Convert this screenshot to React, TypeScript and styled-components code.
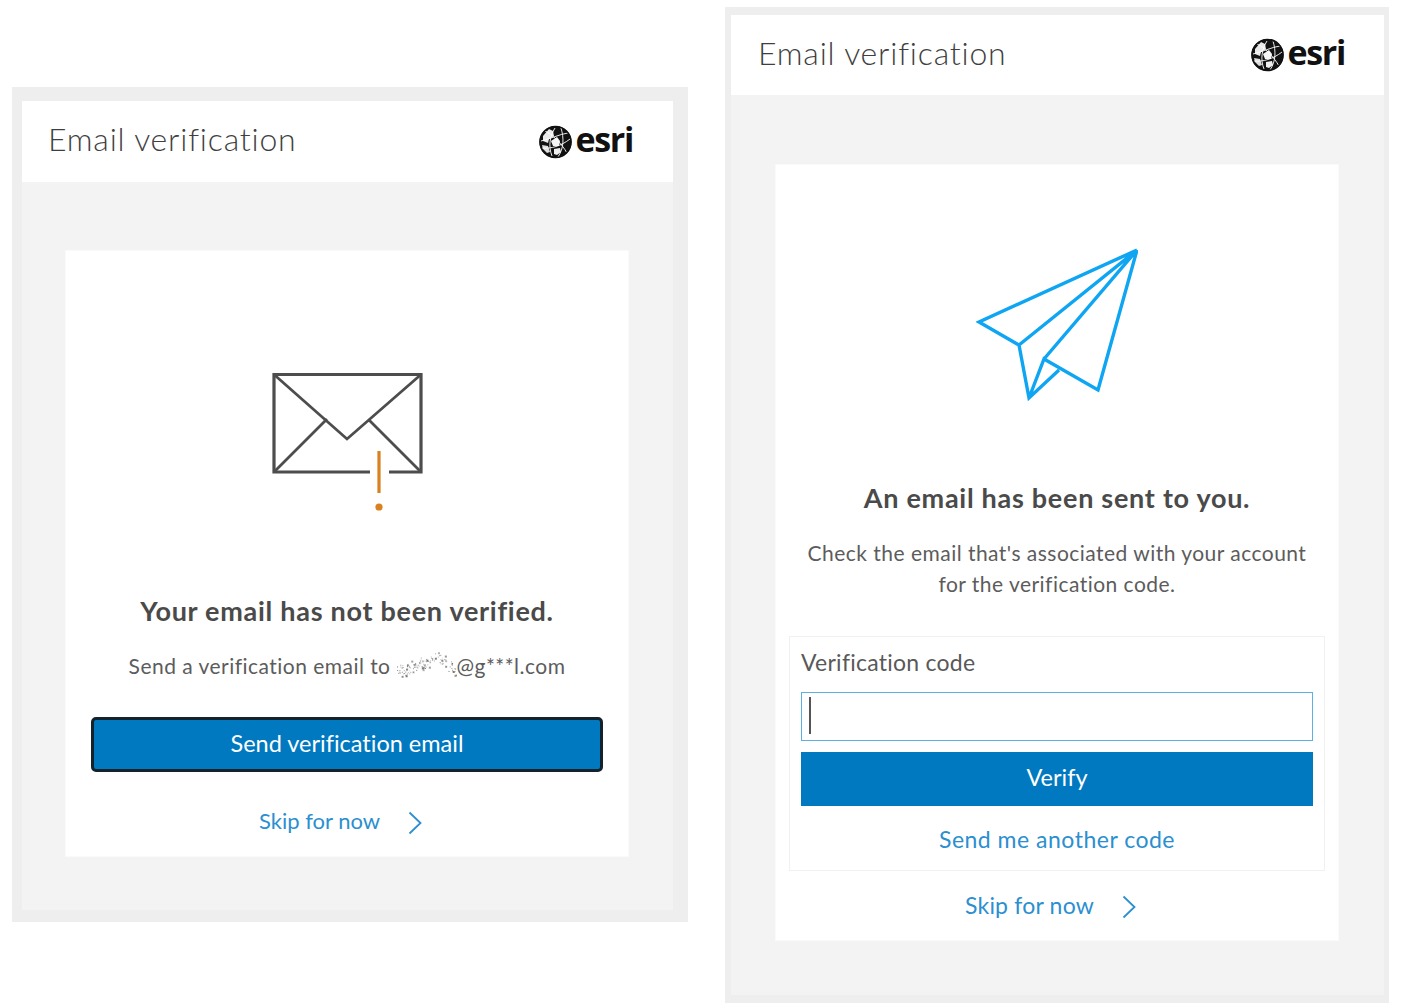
import React from "react";
import styled, { createGlobalStyle } from "styled-components";

const Global = createGlobalStyle`
  html, body { margin: 0; padding: 0; background: #fff; }
  body { font-family: "Lato", "Noto Sans", sans-serif; color: #4c4c4c; font-variant-ligatures: none; }
  * { box-sizing: border-box; }
`;

const Page = styled.div`
  display: flex;
  align-items: flex-start;
  width: 1401px;
  height: 1008px;
  overflow: hidden;
  padding: 7px 12px 0 12px;
  gap: 37px;
`;

const Frame = styled.section<{ $left?: boolean }>`
  flex: none;
  background: #eeeeee;
  width: ${(p) => (p.$left ? "676px" : "664px")};
  margin-top: ${(p) => (p.$left ? "80px" : "0")};
  padding: ${(p) => (p.$left ? "14px 15px 12px 10px" : "8px 5px 8px 6px")};
`;

const Inner = styled.div`
  background: #f3f3f3;
  display: flex;
  flex-direction: column;
`;

const Header = styled.header<{ $left?: boolean }>`
  height: ${(p) => (p.$left ? "81px" : "80px")};
  background: #fff;
  display: flex;
  align-items: center;
  justify-content: space-between;
  padding: ${(p) => (p.$left ? "0 40px 0 26px" : "0 39px 0 27px")};
`;

const Title = styled.h1`
  margin: 0 0 6px;
  font-size: 32px;
  font-weight: 300;
  letter-spacing: 0.8px;
  color: #3f3f3f;
`;

const Logo = styled.div`
  display: flex;
  align-items: center;
  gap: 3px;
`;

const LogoWord = styled.span`
  font-family: "Open Sans", sans-serif;
  font-size: 34px;
  font-weight: 700;
  line-height: 34px;
  letter-spacing: -1.3px;
  color: #111;
  margin-bottom: 6px;
`;

const Body = styled.div<{ $left?: boolean }>`
  padding: ${(p) => (p.$left ? "68px 44px 53px 43px" : "69px 45px 54px 44px")};
`;

const Card = styled.div<{ $left?: boolean }>`
  background: #fff;
  height: ${(p) => (p.$left ? "607px" : "777px")};
  border: 1px solid #fafafa;
  display: flex;
  flex-direction: column;
  align-items: center;
  padding: ${(p) => (p.$left ? "121px 25px 0" : "83px 13px 0")};
`;

const Illustration = styled.svg`
  display: block;
  flex: none;
`;

const Heading = styled.h2<{ $top: number }>`
  margin: ${(p) => p.$top}px 0 0;
  font-size: 27px;
  line-height: 32px;
  font-weight: 700;
  letter-spacing: 0.72px;
  color: #4a4a4a;
  text-align: center;
`;

const Message = styled.p<{ $top: number }>`
  margin: ${(p) => p.$top}px 0 0;
  font-size: 21px;
  line-height: 31px;
  font-weight: 400;
  letter-spacing: 0.47px;
  color: #5c5c5c;
  text-align: center;
  display: flex;
  flex-wrap: wrap;
  justify-content: center;
  align-items: center;
`;

const Redacted = styled.svg`
  margin: 0 0 0 6px;
`;

const ButtonGap = styled.div`
  height: 36px;
  flex: none;
`;

const PrimaryButton = styled.button<{ $focused?: boolean }>`
  display: block;
  width: ${(p) => (p.$focused ? "512px" : "100%")};
  height: ${(p) => (p.$focused ? "55px" : "54px")};
  background: #0079c1;
  color: #fff;
  font-family: inherit;
  font-size: 23.5px;
  font-weight: 400;
  font-variant-ligatures: none;
  border: ${(p) => (p.$focused ? "3px solid #14222c" : "0")};
  border-radius: ${(p) => (p.$focused ? "5px" : "0")};
  padding: 0 0 4px;
`;

const SkipLink = styled.a<{ $top: number; $wide?: boolean }>`
  display: flex;
  align-items: center;
  gap: 28px;
  margin-top: ${(p) => p.$top}px;
  padding-right: 13px;
  font-size: ${(p) => (p.$wide ? "23px" : "22px")};
  letter-spacing: ${(p) => (p.$wide ? "0.2px" : "0")};
  line-height: 30px;
  color: #2b8fd0;
  text-decoration: none;
`;

const Chevron = styled.svg`
  flex: none;
  margin-top: 3px;
`;

const CodeBox = styled.div`
  width: 536px;
  height: 235px;
  margin-top: 37px;
  border: 1px solid #f1f1f1;
  padding: 10px 11px 11px;
  flex: none;
`;

const Label = styled.label`
  display: block;
  font-size: 23px;
  line-height: 30px;
  letter-spacing: 0.25px;
  color: #595959;
`;

const CodeInput = styled.div`
  height: 49px;
  margin-top: 15px;
  margin-bottom: 11px;
  border: 1.5px solid #5fb0e2;
  padding: 4px 7px;
  display: flex;
`;

const Caret = styled.span`
  width: 2px;
  height: 37px;
  background: #555;
`;

const ResendLink = styled.a`
  display: block;
  margin-top: 18px;
  text-align: center;
  font-size: 23px;
  line-height: 30px;
  letter-spacing: 0.5px;
  color: #2b8fd0;
`;

const Globe = () => (
  <svg width="33" height="34" viewBox="0 0 33 34">
    <circle cx="16.5" cy="17" r="16" fill="#111" />
    <path d="M4 11 10 4l4 2 1 5-5 3-1 4-5-2Z" fill="#e9e9e9" />
    <path d="M12 16 18 12l3 4-1 5-6 0Z" fill="#f5f5f5" />
    <path d="M3 20l6 1 2 6-3 1-4-4Z" fill="#ddd" />
    <path d="M15 24 21 23l1 4-4 3-3-1Z" fill="#eee" />
    <path
      d="M16 3c-5 8-7 18-3 28M6 6c7 3 17 13 22 22M2 16c9-2 19-7 27-8M3 23c9 1 19-2 28-9M22 3c3 10 3 20-3 29"
      stroke="#fff"
      strokeWidth="0.9"
      fill="none"
    />
    <circle cx="16.5" cy="17" r="15.5" fill="none" stroke="#111" strokeWidth="1.6" />
  </svg>
);

const EsriLogo = () => (
  <Logo>
    <Globe />
    <LogoWord>esri</LogoWord>
  </Logo>
);

const ChevronIcon = () => (
  <Chevron width="14" height="24" viewBox="0 0 14 24" fill="none">
    <path d="M1.5 1.5 12.5 12 1.5 22.5" stroke="#2b8fd0" strokeWidth="1.8" />
  </Chevron>
);

const noise = (n: number) => {
  const v = Math.sin(n * 12.9898) * 43758.5453;
  return v - Math.floor(v);
};

const dots = Array.from({ length: 130 }, (_, i) => {
  const x = noise(i + 1) * 59;
  const ridge = x < 42 ? 21 - x * 0.36 : 6 + (x - 42) * 0.8;
  return {
    x,
    y: ridge + (noise(i + 200) - 0.5) * 13,
    s: noise(i + 400) > 0.85 ? 2 : 1,
    o: 0.2 + noise(i + 600) * 0.6,
  };
});

const RedactedName = () => (
  <Redacted width="60" height="30" viewBox="0 0 60 30">
    {dots.map((d, i) => (
      <rect key={i} x={d.x} y={d.y} width={d.s} height={d.s} fill="#555" opacity={d.o} />
    ))}
  </Redacted>
);

export default function App() {
  return (
    <>
      <Global />
      <Page>
        <Frame $left>
          <Inner>
            <Header $left>
              <Title>Email verification</Title>
              <EsriLogo />
            </Header>
            <Body $left>
              <Card $left>
                <Illustration width="152" height="140" viewBox="0 0 152 140" fill="none">
                  <path d="M99 100H3V2.5H150V100H118" stroke="#4d4d4d" strokeWidth="3.2" />
                  <path d="M3 2.5 76 67 150 2.5M3 100 56 47M97 47 150 100" stroke="#4d4d4d" strokeWidth="2.8" />
                  <path d="M108 79V121" stroke="#d9801f" strokeWidth="3.2" />
                  <circle cx="108" cy="135" r="3.6" fill="#d9801f" />
                </Illustration>
                <Heading $top={83}>Your email has not been verified.</Heading>
                <Message $top={23}>
                  Send a verification email to
                  <RedactedName />
                  @g***l.com
                </Message>
                <ButtonGap />
                <PrimaryButton $focused>Send verification email</PrimaryButton>
                <SkipLink $top={34}>
                  Skip for now
                  <ChevronIcon />
                </SkipLink>
              </Card>
            </Body>
          </Inner>
        </Frame>
        <Frame>
          <Inner>
            <Header>
              <Title>Email verification</Title>
              <EsriLogo />
            </Header>
            <Body>
              <Card>
                <Illustration width="162" height="154" viewBox="0 0 162 154" fill="none">
                  <path
                    d="M161 2 3 74 43 97 53 150 83 122M161 2 122 142 68 111 53 150M161 2 43 97M161 2 68 111"
                    stroke="#0ea5f2"
                    strokeWidth="3.4"
                  />
                </Illustration>
                <Heading $top={80}>An email has been sent to you.</Heading>
                <Message $top={23}>
                  Check the email that's associated with your account
                  <br />
                  for the verification code.
                </Message>
                <CodeBox>
                  <Label>Verification code</Label>
                  <CodeInput>
                    <Caret />
                  </CodeInput>
                  <PrimaryButton>Verify</PrimaryButton>
                  <ResendLink>Send me another code</ResendLink>
                </CodeBox>
                <SkipLink $top={19} $wide>
                  Skip for now
                  <ChevronIcon />
                </SkipLink>
              </Card>
            </Body>
          </Inner>
        </Frame>
      </Page>
    </>
  );
}
